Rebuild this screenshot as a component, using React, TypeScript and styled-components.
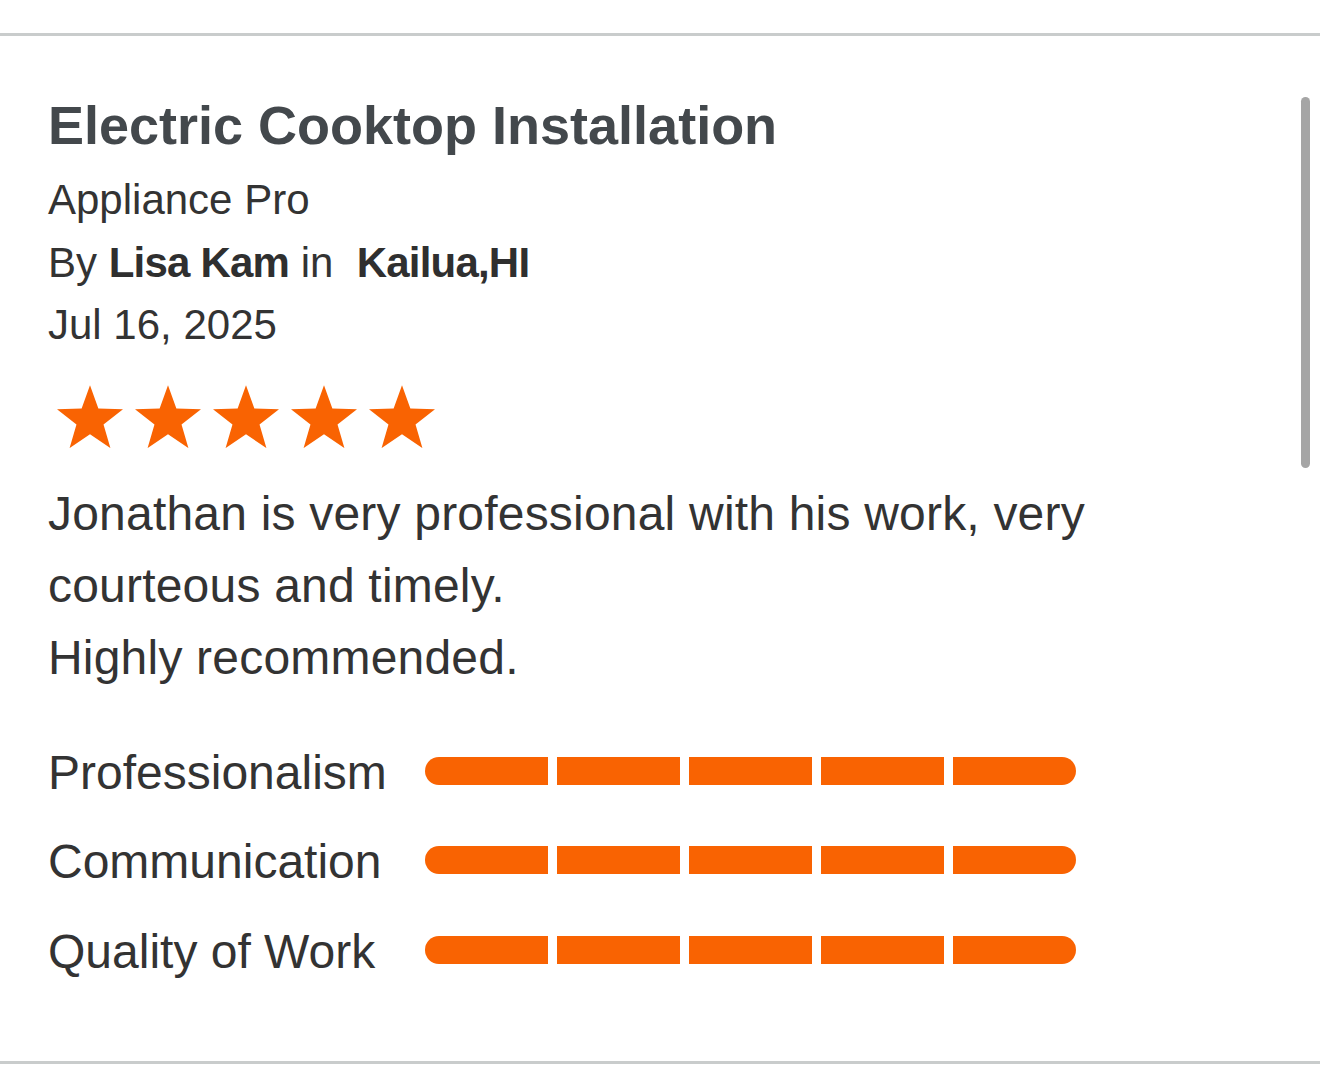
import React from "react";
import styled, { createGlobalStyle } from "styled-components";

const GlobalStyle = createGlobalStyle`
  html, body {
    margin: 0;
    padding: 0;
    background: #ffffff;
  }
  body {
    font-family: "Liberation Sans", Arial, Helvetica, sans-serif;
    color: #333333;
    -webkit-font-smoothing: antialiased;
  }
`;

const Page = styled.div`
  position: relative;
  width: 1320px;
  height: 1073px;
  padding-top: 33px;
  box-sizing: border-box;
  overflow: hidden;
`;

const Card = styled.section`
  border-top: 3px solid #c9cccc;
  border-bottom: 3px solid #c9cccc;
  padding: 57px 48px 79px 48px;
  display: flex;
  flex-direction: column;
`;

const Title = styled.h1`
  margin: 0 0 11px 0;
  font-size: 54px;
  line-height: 65px;
  font-weight: 700;
  color: #43484c;
`;

const MetaLine = styled.div`
  font-size: 42px;
  line-height: 62.5px;
  color: #333333;
  white-space: pre;
`;

const Strong = styled.span`
  font-weight: 700;
  letter-spacing: -0.8px;
  color: #2f2f2f;
`;

const Stars = styled.div`
  display: flex;
  gap: 12px;
  margin: 28px 0 0 9px;
  height: 63px;
`;

const StarSvg = styled.svg`
  width: 66px;
  height: 63px;
  display: block;
`;

const Body = styled.p`
  margin: 30px 0 0 0;
  font-size: 48px;
  line-height: 72px;
  letter-spacing: 0.2px;
  color: #333333;
`;

const Ratings = styled.div`
  margin-top: 49px;
  display: flex;
  flex-direction: column;
  gap: 29.5px;
`;

const RatingRow = styled.div`
  display: grid;
  grid-template-columns: 377px 651px;
  align-items: center;
  height: 60px;
`;

const RatingLabel = styled.span`
  font-size: 48px;
  line-height: 60px;
  color: #333333;
`;

const Bar = styled.div`
  display: flex;
  gap: 9px;
  height: 28px;
  margin-bottom: 4px;
`;

const Segment = styled.div<{ $filled: boolean; $first: boolean; $last: boolean }>`
  flex: 1;
  background: ${(p) => (p.$filled ? "#f96302" : "#e5e5e5")};
  border-radius: ${(p) =>
    p.$first ? "14px 0 0 14px" : p.$last ? "0 14px 14px 0" : "0"};
`;

const ScrollThumb = styled.div`
  position: absolute;
  left: 1301px;
  top: 97px;
  width: 9px;
  height: 371px;
  border-radius: 5px;
  background: #a5a5a5;
`;

const starPoints = (() => {
  const R = 34.7;
  const r = R * 0.41;
  const cx = 33;
  const cy = R + 0.3;
  const pts: string[] = [];
  for (let i = 0; i < 10; i++) {
    const rad = i % 2 === 0 ? R : r;
    const a = -Math.PI / 2 + (i * Math.PI) / 5;
    pts.push(`${(cx + rad * Math.cos(a)).toFixed(2)},${(cy + rad * Math.sin(a)).toFixed(2)}`);
  }
  return pts.join(" ");
})();

const Star = () => (
  <StarSvg viewBox="0 0 66 63" aria-hidden="true">
    <polygon points={starPoints} fill="#f96302" />
  </StarSvg>
);

const ratings = [
  { label: "Professionalism", value: 5 },
  { label: "Communication", value: 5 },
  { label: "Quality of Work", value: 5 },
];

export default function App() {
  return (
    <>
      <GlobalStyle />
      <Page>
        <Card>
          <Title>Electric Cooktop Installation</Title>
          <MetaLine>Appliance Pro</MetaLine>
          <MetaLine>
            By <Strong>Lisa Kam</Strong> in{"  "}
            <Strong>Kailua,HI</Strong>
          </MetaLine>
          <MetaLine>Jul 16, 2025</MetaLine>
          <Stars>
            {[0, 1, 2, 3, 4].map((i) => (
              <Star key={i} />
            ))}
          </Stars>
          <Body>
            Jonathan is very professional with his work, very courteous and timely.
            <br />
            Highly recommended.
          </Body>
          <Ratings>
            {ratings.map((r) => (
              <RatingRow key={r.label}>
                <RatingLabel>{r.label}</RatingLabel>
                <Bar>
                  {[0, 1, 2, 3, 4].map((i) => (
                    <Segment key={i} $filled={i < r.value} $first={i === 0} $last={i === 4} />
                  ))}
                </Bar>
              </RatingRow>
            ))}
          </Ratings>
        </Card>
        <ScrollThumb />
      </Page>
    </>
  );
}
